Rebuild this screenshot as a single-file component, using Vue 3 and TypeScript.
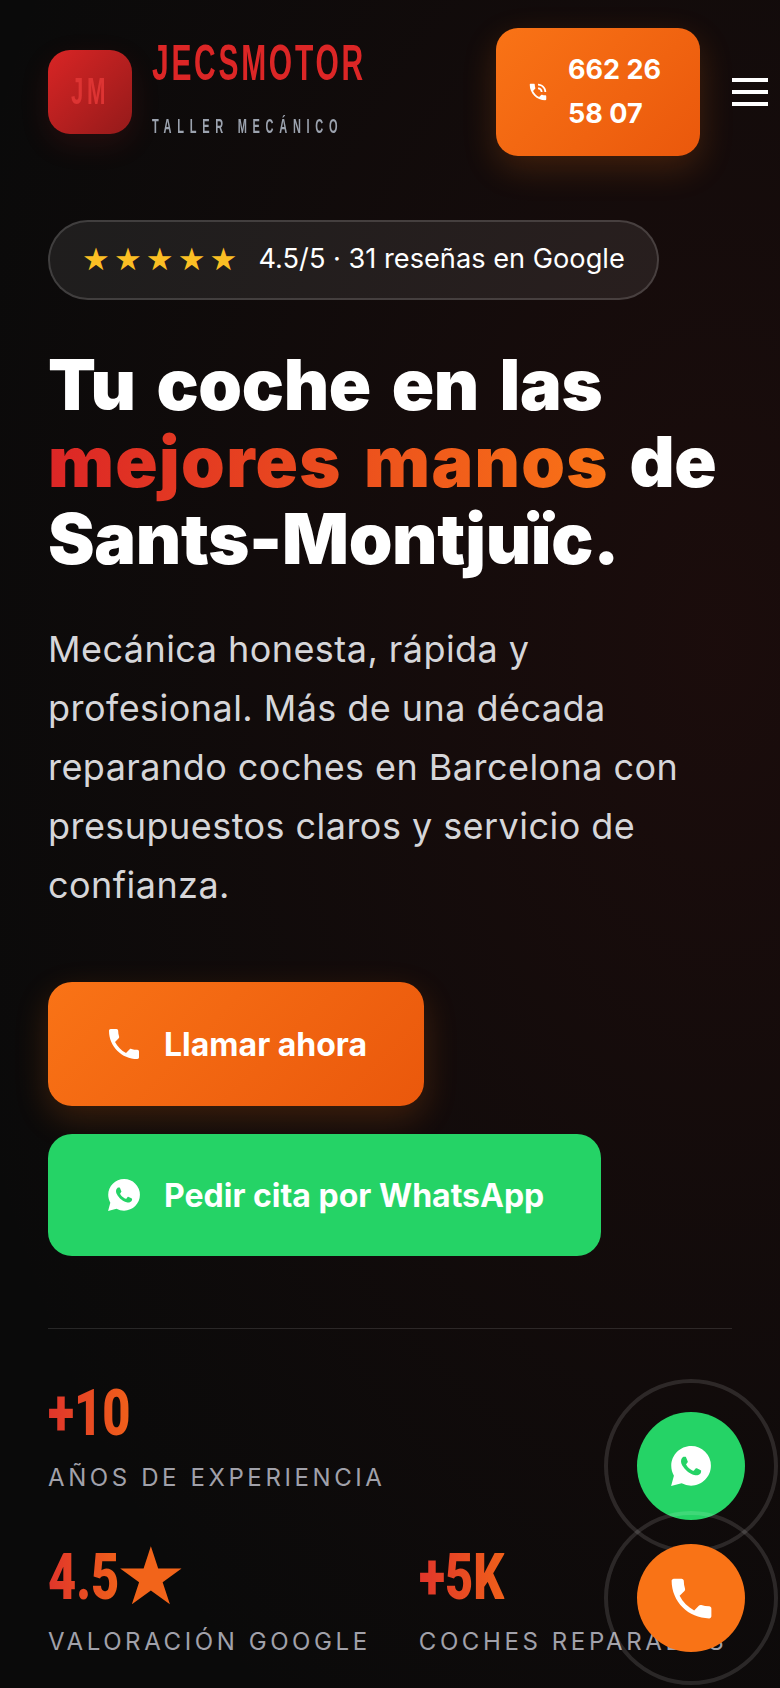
<script setup lang="ts">
const phone =
  'M6.62 10.79c1.44 2.83 3.76 5.14 6.59 6.59l2.2-2.2c.27-.27.67-.36 1.02-.24 1.12.37 2.33.57 3.57.57.55 0 1 .45 1 1V20c0 .55-.45 1-1 1-9.39 0-17-7.61-17-17 0-.55.45-1 1-1h3.5c.55 0 1 .45 1 1 0 1.25.2 2.45.57 3.57.11.35.03.74-.25 1.02l-2.2 2.2z'
const phoneTalk =
  'M20 15.5c-1.25 0-2.45-.2-3.57-.57-.35-.11-.74-.03-1.02.24l-2.2 2.2c-2.83-1.44-5.15-3.75-6.59-6.59l2.2-2.21c.28-.26.36-.65.25-1C8.7 6.45 8.5 5.25 8.5 4c0-.55-.45-1-1-1H4c-.55 0-1 .45-1 1 0 9.39 7.61 17 17 17 .55 0 1-.45 1-1v-3.5c0-.55-.45-1-1-1zM19 12h2c0-4.97-4.03-9-9-9v2c3.87 0 7 3.13 7 7zm-4 0h2c0-2.76-2.24-5-5-5v2c1.66 0 3 1.34 3 3z'
const whatsapp =
  'M20.464 3.488A11.815 11.815 0 0012.05 0C5.495 0 .16 5.335.157 11.892c0 2.096.547 4.142 1.588 5.945L.057 24l6.305-1.654a11.882 11.882 0 005.683 1.448h.005c6.554 0 11.89-5.335 11.893-11.893a11.821 11.821 0 00-3.48-8.413zM17.472 14.382c-.297-.149-1.758-.867-2.03-.967-.273-.099-.471-.148-.67.15-.197.297-.767.966-.94 1.164-.173.199-.347.223-.644.075-.297-.15-1.255-.463-2.39-1.475-.883-.788-1.48-1.761-1.653-2.059-.173-.297-.018-.458.13-.606.134-.133.298-.347.446-.52.149-.174.198-.298.298-.497.099-.198.05-.371-.025-.52-.075-.149-.669-1.612-.916-2.207-.242-.579-.487-.5-.669-.51-.173-.008-.371-.01-.57-.01-.198 0-.52.074-.792.372-.272.297-1.04 1.016-1.04 2.479 0 1.462 1.065 2.875 1.213 3.074.149.198 2.096 3.2 5.077 4.487.709.306 1.262.489 1.694.625.712.227 1.36.195 1.871.118.571-.085 1.758-.719 2.006-1.413.248-.694.248-1.289.173-1.413-.074-.124-.272-.198-.57-.347z'
</script>

<template>
  <div class="page">
    <header class="top">
      <div class="logo"><span>JM</span></div>
      <div class="brand">
        <div class="brand-name">JECSMOTOR</div>
        <div class="brand-sub">TALLER MECÁNICO</div>
      </div>
      <a class="call">
        <svg class="call-icon" viewBox="0 0 24 24"><path :d="phoneTalk" /></svg>
        <span>662 26 58 07</span>
      </a>
      <div class="burger"><i></i><i></i><i></i></div>
    </header>

    <main class="hero">
      <div class="pill">
        <span class="stars">★★★★★</span>
        <span>4.5/5 · 31 reseñas en Google</span>
      </div>
      <h1>Tu coche en las <em>mejores manos</em> de Sants-Montjuïc.</h1>
      <p class="lead">Mecánica honesta, rápida y profesional. Más de una década reparando coches en Barcelona con presupuestos claros y servicio de confianza.</p>
      <div class="actions">
        <a class="btn btn-orange">
          <svg viewBox="0 0 24 24"><path :d="phone" /></svg>
          Llamar ahora
        </a>
        <a class="btn btn-green">
          <svg viewBox="0 0 24 24"><path fill-rule="evenodd" :d="whatsapp" /></svg>
          Pedir cita por WhatsApp
        </a>
      </div>
      <div class="stats">
        <div class="stat">
          <div class="num"><span class="grad">+10</span></div>
          <div class="label">AÑOS DE EXPERIENCIA</div>
        </div>
        <div class="stat">
          <div class="num"><span class="grad">4.5</span><span class="star">★</span></div>
          <div class="label">VALORACIÓN GOOGLE</div>
        </div>
        <div class="stat">
          <div class="num"><span class="grad">+5K</span></div>
          <div class="label">COCHES REPARADOS</div>
        </div>
      </div>
    </main>

    <a class="fab fab-green">
      <svg viewBox="0 0 24 24"><path fill-rule="evenodd" :d="whatsapp" /></svg>
    </a>
    <a class="fab fab-orange">
      <svg viewBox="0 0 24 24"><path :d="phone" /></svg>
    </a>
  </div>
</template>

<style>
html, body { margin: 0; background: #0a0a0a; }
</style>

<style scoped>
.page {
  position: relative;
  width: 780px;
  height: 1688px;
  overflow: hidden;
  box-sizing: border-box;
  padding: 28px 48px 0;
  color: #fff;
  font-family: Inter, "Liberation Sans", sans-serif;
  background:
    radial-gradient(ellipse 800px 1300px at 92% 38%, rgba(140, 28, 22, 0.13), transparent 100%),
    #0a0a0a;
}
.top {
  display: flex;
  align-items: center;
  width: 720px;
  height: 128px;
}
.logo {
  width: 84px;
  height: 84px;
  flex: none;
  border-radius: 22px;
  background: linear-gradient(135deg, #d92525, #941a1a);
  box-shadow: 0 10px 30px rgba(220, 38, 38, 0.12);
  display: flex;
  align-items: center;
  padding-left: 23px;
  box-sizing: border-box;
  color: #dd3433;
  font: 700 37px "Liberation Sans", sans-serif;
  letter-spacing: 6px;
}
.logo span {
  display: inline-block;
  transform: scaleX(0.6);
  transform-origin: left center;
}
.brand {
  margin-left: 20px;
  width: 344px;
  flex: none;
  font-family: "Liberation Sans", sans-serif;
  align-self: flex-start;
  white-space: nowrap;
}
.brand-name {
  margin-top: 8px;
  color: #dc2626;
  font-size: 50px;
  font-weight: 700;
  line-height: 54px;
  letter-spacing: 4.5px;
  transform: scaleX(0.6);
  transform-origin: left center;
}
.brand-sub {
  margin-top: 25px;
  color: #9ca3af;
  font-size: 20px;
  font-weight: 700;
  line-height: 22px;
  letter-spacing: 10.4px;
  transform: scaleX(0.55);
  transform-origin: left center;
}
.call {
  width: 204px;
  height: 128px;
  flex: none;
  box-sizing: border-box;
  padding: 0 30px 0 31px;
  border-radius: 22px;
  background: linear-gradient(135deg, #f97316, #ea580c);
  box-shadow: 0 12px 34px rgba(249, 115, 22, 0.2);
  display: flex;
  align-items: center;
  gap: 19px;
  font-size: 27px;
  font-weight: 700;
  line-height: 44px;
}
.call-icon {
  width: 22px;
  height: 22px;
  flex: none;
  fill: #fff;
}
.burger {
  margin-left: 32px;
  width: 36px;
  flex: none;
  display: flex;
  flex-direction: column;
  gap: 8px;
}
.burger i {
  display: block;
  height: 4px;
  background: #fff;
}
.hero {
  margin-top: 64px;
}
.pill {
  display: inline-flex;
  align-items: center;
  gap: 17px;
  height: 80px;
  box-sizing: border-box;
  padding: 0 32px 3px;
  border-radius: 40px;
  border: 2px solid rgba(255, 255, 255, 0.15);
  background: rgba(255, 255, 255, 0.08);
  font-size: 27.2px;
  white-space: nowrap;
}
.stars {
  color: #fbbf24;
  font-size: 31px;
  font-family: "DejaVu Sans", sans-serif;
  letter-spacing: 4.1px;
}
h1 {
  margin: 46px 0 0;
  font-size: 70px;
  font-weight: 900;
  line-height: 77px;
  letter-spacing: -0.3px;
  word-spacing: 7px;
}
h1 em {
  font-style: normal;
  letter-spacing: 1.3px;
  background: linear-gradient(90deg, #dc2626, #f97316);
  -webkit-background-clip: text;
  background-clip: text;
  color: transparent;
}
.lead {
  margin: 43px 0 0;
  max-width: 640px;
  font-size: 36px;
  line-height: 59px;
  letter-spacing: 0.45px;
  color: #d6d6d9;
}
.actions {
  margin-top: 67px;
  display: flex;
  flex-direction: column;
  align-items: flex-start;
  gap: 28px;
}
.btn {
  display: flex;
  align-items: center;
  gap: 20px;
  height: 122px;
  box-sizing: border-box;
  padding: 0 57px 0 56px;
  border-radius: 24px;
  font-size: 32px;
  font-weight: 700;
  white-space: nowrap;
}
.btn svg {
  width: 40px;
  height: 40px;
  fill: #fff;
  flex: none;
}
.btn-orange {
  height: 124px;
  background: linear-gradient(135deg, #f97316, #ea580c);
  box-shadow: 0 12px 34px rgba(249, 115, 22, 0.2);
}
.btn-green {
  background: #25d366;
}
.btn-green svg {
  width: 32px;
  height: 32px;
  margin: 0 4px;
}
.stats {
  margin-top: 72px;
  padding-top: 48px;
  border-top: 1px solid rgba(255, 255, 255, 0.12);
  display: flex;
  flex-wrap: wrap;
  column-gap: 48px;
  row-gap: 48px;
}
.num {
  display: flex;
  align-items: center;
  height: 72px;
  font: 900 65px/72px Roboto, "Liberation Sans", sans-serif;
}
.grad {
  display: inline-block;
  transform: scaleX(0.75);
  transform-origin: left center;
  background: linear-gradient(90deg, #e0352b, #f0601a);
  -webkit-background-clip: text;
  background-clip: text;
  color: transparent;
}
.star {
  margin-left: -28px;
  color: #f2641a;
  font-family: "DejaVu Sans", sans-serif;
  font-size: 80px;
  font-weight: 400;
  line-height: 72px;
}
.label {
  margin-top: 14px;
  font-size: 24px;
  line-height: 30px;
  letter-spacing: 3.6px;
  color: #a1a1aa;
  white-space: nowrap;
}
.fab {
  position: absolute;
  right: 35px;
  width: 108px;
  height: 108px;
  border-radius: 50%;
  display: flex;
  align-items: center;
  justify-content: center;
}
.fab::after {
  content: "";
  position: absolute;
  inset: -33px;
  border-radius: 50%;
  border: 4px solid rgba(255, 255, 255, 0.12);
}
.fab svg {
  width: 40px;
  height: 40px;
  fill: #fff;
}
.fab-green {
  top: 1412px;
  background: #25d366;
}
.fab-orange {
  top: 1544px;
  background: #f97316;
}
.fab-orange svg {
  width: 53px;
  height: 53px;
}
</style>
